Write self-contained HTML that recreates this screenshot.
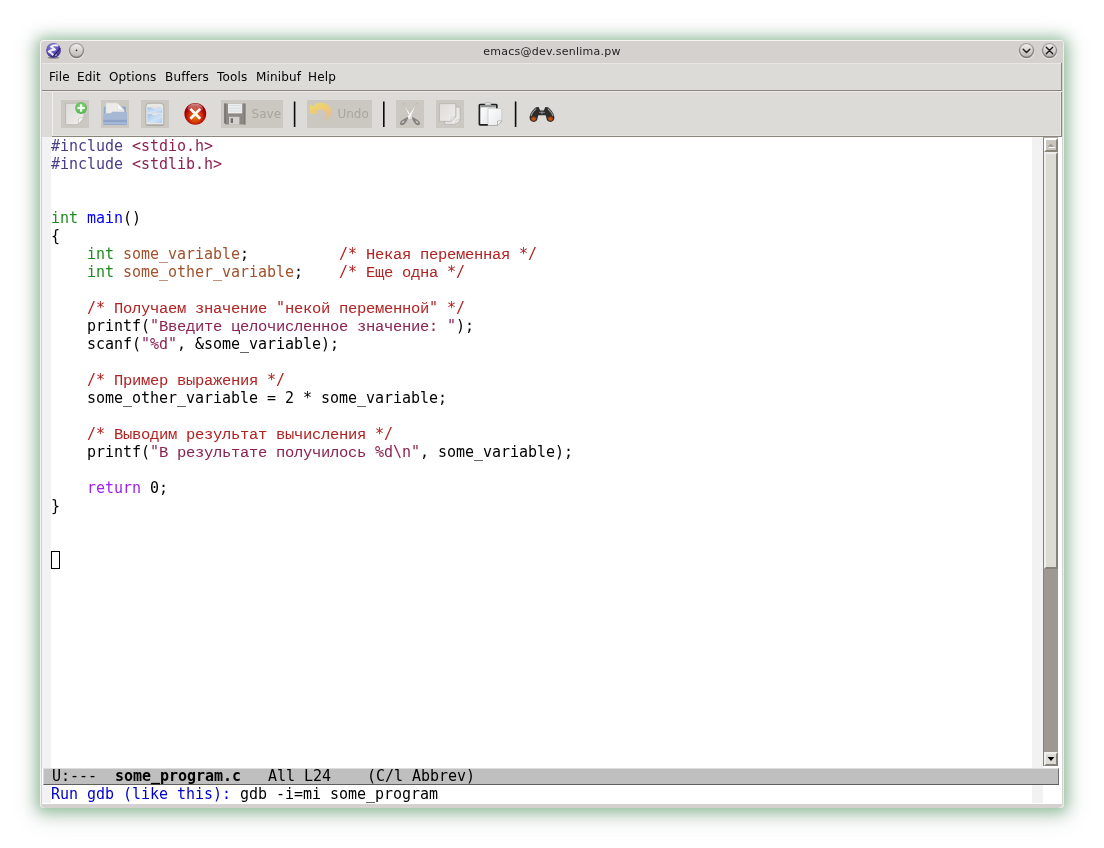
<!DOCTYPE html>
<html lang="ru">
<head>
<meta charset="utf-8">
<title>emacs@dev.senlima.pw</title>
<style>
html,body{margin:0;padding:0;}
body{width:1104px;height:848px;background:#fff;overflow:hidden;position:relative;font-family:"DejaVu Sans","Liberation Sans",sans-serif;}
.abs{position:absolute;}
#shadow{position:absolute;left:40px;top:40px;width:1024px;height:768px;border-radius:4px;
 box-shadow:0 1px 14px 3px rgba(138,186,147,.9),0 4px 22px 7px rgba(70,85,75,.15);}
#win{position:absolute;left:40px;top:40px;width:1024px;height:768px;background:#d5d1ce;border-radius:3.5px 3.5px 5px 5px;overflow:hidden;will-change:transform;}
#hl{z-index:5;position:absolute;left:0;top:0;width:1024px;height:768px;border-radius:3.5px 3.5px 5px 5px;box-shadow:inset 1px 1px 0 rgba(255,255,255,.75),inset -1px 0 0 rgba(255,255,255,.6);pointer-events:none;}
#title{position:absolute;left:0;top:0;width:1024px;height:23px;background:#d5d1ce;}
#ttext{position:absolute;left:0;top:5px;width:1024px;text-align:center;font-size:11px;line-height:14px;letter-spacing:.25px;color:#1e1e1e;}
#client{position:absolute;left:2px;top:23px;width:1020px;height:741px;background:#fff;}
#menubar{position:absolute;left:0;top:0;width:1020px;height:27px;background:#dddbd7;border-top:1px solid #e9e7e4;box-sizing:border-box;}
#menubar span{position:absolute;top:5px;font-size:12px;line-height:16px;letter-spacing:.15px;color:#000;white-space:pre;}
#mline{position:absolute;left:0;top:27px;width:1020px;height:1px;background:#8a867e;}
#toolbar{position:absolute;left:0;top:28px;width:1020px;height:45px;background:#dddbd7;border-top:1px solid #eceae7;box-sizing:border-box;}
#tline{position:absolute;left:0;top:73px;width:1020px;height:1px;background:#8a867e;}
.tb{position:absolute;top:9px;height:28px;background:#cbc8c2;}
.sep{position:absolute;top:9px;width:2px;height:27px;background:#111;}
.tbl{position:absolute;top:15px;font-size:13px;line-height:16px;color:#9a968f;}
#text{position:absolute;left:0;top:74px;width:1020px;height:667px;background:#fff;}
.fr{position:absolute;background:#f2f2f2;}
pre{margin:0;position:absolute;left:9px;top:0;will-change:transform;font-family:"DejaVu Sans Mono","Liberation Mono",monospace;font-size:15px;line-height:18px;letter-spacing:-0.031px;color:#000;white-space:pre;}
pre i{font-style:normal;font-family:"Liberation Mono",monospace;font-size:15.5px;letter-spacing:-0.302px;line-height:1px;}
.pp{color:#483d8b}.st{color:#8b2252}.ty{color:#228b22}.fn{color:#0000ff}.va{color:#a0522d}.cm{color:#b22222}.kw{color:#a020f0}.mp{color:#0000cd}
#cursor{position:absolute;left:9px;top:414px;width:9px;height:18px;box-sizing:border-box;border:1px solid #000;}
#sb{position:absolute;left:1001px;top:0;width:15px;height:629px;background:#9d9992;border-left:1px solid #86827a;border-top:1px solid #b3afa8;box-sizing:border-box;}
.btn{position:absolute;left:0;width:14px;background:#dddbd6;box-sizing:border-box;border:2px solid;border-color:#efeeec #86827a #86827a #efeeec;}
#modeline{position:absolute;left:1px;top:631px;width:1016px;height:17px;background:#bfbfbf;box-sizing:border-box;border-top:1px solid #dcdcdc;border-bottom:1px solid #5e5e5e;border-right:1px solid #6e6e6e;border-left:1px solid #dcdcdc;}
</style>
</head>
<body>
<div id="shadow"></div>
<div id="win">
 <div id="hl"></div>
 <div id="title"><div id="ttext">emacs@dev.senlima.pw</div></div>
 <div id="client">
  <div id="menubar">
   <span style="left:7px">File</span><span style="left:35px">Edit</span><span style="left:67px">Options</span><span style="left:123px">Buffers</span><span style="left:175px">Tools</span><span style="left:214px">Minibuf</span><span style="left:266px">Help</span>
  </div>
  <div id="mline"></div><div class="abs" style="left:1019px;top:0;width:1px;height:28px;background:#8a867e"></div>
  <div id="toolbar"><div class="abs" style="left:10px;top:0;width:1px;height:44px;background:#f1f0ee"></div><div class="abs" style="left:1018px;top:0;width:1px;height:44px;background:#e8e6e3"></div><div class="abs" style="left:1019px;top:0;width:1px;height:45px;background:#8a867e"></div><div class="abs" style="left:10px;top:43px;width:1009px;height:1px;background:#e8e6e3"></div></div>
  <div id="tline"></div><div class="abs" style="left:0;top:73px;width:10px;height:1px;background:#dddbd7"></div>
  <div id="text">
   <div class="fr" style="left:0;top:0;width:9px;height:631px"></div>
   <div class="fr" style="left:990px;top:0;width:11px;height:631px"></div>
   <div class="fr" style="left:0;top:648px;width:9px;height:18px"></div>
   <div class="fr" style="left:990px;top:648px;width:11px;height:18px"></div>
<pre style="top:0"><span class="pp">#include</span> <span class="st">&lt;stdio.h&gt;</span>
<span class="pp">#include</span> <span class="st">&lt;stdlib.h&gt;</span>


<span class="ty">int</span> <span class="fn">main</span>()
{
    <span class="ty">int</span> <span class="va">some_variable</span>;          <span class="cm">/* <i>Некая</i> <i>переменная</i> */</span>
    <span class="ty">int</span> <span class="va">some_other_variable</span>;    <span class="cm">/* <i>Еще</i> <i>одна</i> */</span>

    <span class="cm">/* <i>Получаем</i> <i>значение</i> "<i>некой</i> <i>переменной</i>" */</span>
    printf(<span class="st">"<i>Введите</i> <i>целочисленное</i> <i>значение</i>: "</span>);
    scanf(<span class="st">"%d"</span>, &amp;some_variable);

    <span class="cm">/* <i>Пример</i> <i>выражения</i> */</span>
    some_other_variable = 2 * some_variable;

    <span class="cm">/* <i>Выводим</i> <i>результат</i> <i>вычисления</i> */</span>
    printf(<span class="st">"<i>В</i> <i>результате</i> <i>получилось</i> %d\n"</span>, some_variable);

    <span class="kw">return</span> 0;
}</pre>
   <div id="cursor"></div>
   <div id="sb">
    <div class="btn" style="top:0;height:14px;background:#c9c6c0;border-color:#fff #8a867c #8a867c #fff"></div>
    <div class="btn" style="top:14px;height:417px"></div>
    <div class="btn" style="top:614px;height:14px"></div>
   </div>
   <div id="modeline"></div>
<pre style="top:630px;left:10px">U:---  <b>some_program.c</b>   All L24    (C/l Abbrev)</pre>
<pre style="top:648px"><span class="mp">Run gdb (like this): </span>gdb -i=mi some_program</pre>
  </div>
 </div>
</div>

<svg id="icons" class="abs" style="left:0;top:0;will-change:transform" width="1104" height="848" viewBox="0 0 1104 848">
<defs>
 <linearGradient id="gPage" x1="0" y1="0" x2="1" y2="1"><stop offset="0" stop-color="#dddcd8"/><stop offset="1" stop-color="#efeeec"/></linearGradient>
 <linearGradient id="gPageW" x1="0" y1="0" x2="1" y2="1"><stop offset="0" stop-color="#ffffff"/><stop offset="1" stop-color="#e4e6e8"/></linearGradient>
 <radialGradient id="gGreen" cx="0.5" cy="0.4" r="0.65"><stop offset="0" stop-color="#9ad88c"/><stop offset="1" stop-color="#4aae46"/></radialGradient>
 <radialGradient id="gRed" cx="0.5" cy="0.62" r="0.52"><stop offset="0" stop-color="#ea7800"/><stop offset="0.45" stop-color="#d84804"/><stop offset="0.8" stop-color="#b80808"/><stop offset="1" stop-color="#960000"/></radialGradient>
 <linearGradient id="gRedGloss" x1="0" y1="0" x2="0" y2="1"><stop offset="0" stop-color="#fff" stop-opacity=".55"/><stop offset="1" stop-color="#fff" stop-opacity="0"/></linearGradient>
 <linearGradient id="gBlue" x1="0" y1="0" x2="1" y2="1"><stop offset="0" stop-color="#9cc3ee"/><stop offset="0.6" stop-color="#cfe3f7"/><stop offset="1" stop-color="#a9cbf0"/></linearGradient>
 <linearGradient id="gUndo" x1="0.1" y1="0" x2="0.55" y2="1"><stop offset="0" stop-color="#e9dd6a"/><stop offset="0.5" stop-color="#f0c878"/><stop offset="0.75" stop-color="#efc07a" stop-opacity=".7"/><stop offset="1" stop-color="#eeb86a" stop-opacity="0"/></linearGradient>
 <linearGradient id="gBtn" x1="0" y1="0" x2="0" y2="1"><stop offset="0" stop-color="#efedeb"/><stop offset="1" stop-color="#bdbab6"/></linearGradient>
 <linearGradient id="gBtnRing" x1="0" y1="0" x2="0" y2="1"><stop offset="0" stop-color="#a29f9b"/><stop offset="1" stop-color="#7c7976"/></linearGradient>
 <radialGradient id="gEmacs" cx="0.4" cy="0.3" r="0.8"><stop offset="0" stop-color="#8a86d8"/><stop offset="0.6" stop-color="#5548b0"/><stop offset="1" stop-color="#2e2680"/></radialGradient>
 <radialGradient id="gLens" cx="0.5" cy="0.6" r="0.6"><stop offset="0" stop-color="#dc641c"/><stop offset="1" stop-color="#7a2c08"/></radialGradient>
</defs>

<!-- title bar: emacs icon -->
<ellipse cx="53.5" cy="57.6" rx="6" ry="1.2" fill="#000" opacity=".35"/>
<circle cx="53.5" cy="50.3" r="7.4" fill="url(#gEmacs)"/>
<path d="M57.6 45.5 C55 45 52.6 45.6 51 46.6 L55 49.5 C52.5 49.8 50 50.6 48.7 51.5 C50.5 52.8 52 53.6 53 54.8" fill="none" stroke="#fff" stroke-width="1.9" stroke-linejoin="round" stroke-linecap="round" opacity=".9"/><path d="M55.4 55.6 L56.6 54.6" stroke="#fff" stroke-width="1.2" opacity=".8"/>
<path d="M60.4 48 L52.2 57.4" stroke="#1a1640" stroke-width="1"/>
<!-- title bar: round buttons -->
<g>
 <circle cx="76.5" cy="51.4" r="7.9" fill="#fff" opacity=".55"/>
 <circle cx="76.5" cy="50.6" r="7.7" fill="url(#gBtnRing)"/>
 <circle cx="76.5" cy="50.3" r="6.3" fill="url(#gBtn)"/>
 <circle cx="76.5" cy="50.4" r="0.8" fill="#222"/>
 <circle cx="1026.5" cy="51.4" r="7.9" fill="#fff" opacity=".55"/>
 <circle cx="1026.5" cy="50.6" r="7.7" fill="url(#gBtnRing)"/>
 <circle cx="1026.5" cy="50.3" r="6.3" fill="url(#gBtn)"/>
 <path d="M1023.2 49.2 L1026.5 52.4 L1029.8 49.2" fill="none" stroke="#1c1c1c" stroke-width="1.4" stroke-linecap="round" stroke-linejoin="round"/>
 <circle cx="1049.5" cy="51.4" r="7.9" fill="#fff" opacity=".55"/>
 <circle cx="1049.5" cy="50.6" r="7.7" fill="url(#gBtnRing)"/>
 <circle cx="1049.5" cy="50.3" r="6.3" fill="url(#gBtn)"/>
 <path d="M1046.3 47.3 L1052.7 53.7 M1052.7 47.3 L1046.3 53.7" fill="none" stroke="#1c1c1c" stroke-width="1.4" stroke-linecap="round"/>
</g>

<!-- toolbar button backgrounds -->
<g fill="#cbc8c2">
 <rect x="61" y="100" width="28" height="28"/>
 <rect x="101" y="100" width="28" height="28"/>
 <rect x="141" y="100" width="28" height="28"/>
 <rect x="221" y="100" width="62" height="28"/>
 <rect x="307" y="100" width="65" height="28"/>
 <rect x="396" y="100" width="28" height="28"/>
 <rect x="436" y="100" width="28" height="28"/>
</g>
<!-- separators -->
<g fill="#0a0a0a">
 <rect x="293.8" y="101.5" width="1.6" height="25.5"/>
 <rect x="383" y="101.5" width="1.6" height="25.5"/>
 <rect x="514.8" y="101.5" width="1.6" height="25.5"/>
</g>

<!-- new document -->
<g transform="translate(61,100)">
 <path d="M4.6 3.2 H23 V17.2 L17 24.8 H4.6 Z" fill="url(#gPage)" stroke="#b9b7b2" stroke-width=".9" stroke-linejoin="round"/>
 <path d="M23 17.2 C20.4 17.8 18.2 18.2 17.6 18.8 C17.8 20.8 17.4 23 17 24.8 Z" fill="#f8f8f7" stroke="#b9b7b2" stroke-width=".6"/>
 <circle cx="20.1" cy="8" r="6" fill="url(#gGreen)"/>
 <path d="M20.1 4.3 V11.7 M16.4 8 H23.8" stroke="#f4fbf2" stroke-width="2.1"/>
</g>

<!-- open folder -->
<g transform="translate(101,100)">
 <path d="M2.8 7.4 Q2.8 6.4 3.8 6.4 H24 Q25 6.4 25 7.4 V16 H2.8 Z" fill="#8ea9cd"/>
 <path d="M4.8 2.8 H16 L23.2 10 V14 H4.8 Z" fill="#ecebe9" stroke="#cfcdc9" stroke-width=".5"/>
 <path d="M16 2.8 C16.6 5.5 17 8 16.6 9.8 C19 9.4 21.5 9.6 23.2 10 Z" fill="#fafafa" stroke="#d4d2ce" stroke-width=".4"/>
 <path d="M2.2 14 Q2.2 13.2 3 13.2 H10 L11 11.8 H25.2 Q26 11.8 26 12.6 V24 Q26 25.1 25 25.1 H3.2 Q2.2 25.1 2.2 24 Z" fill="#a5b9d5"/>
 <rect x="2.2" y="19.8" width="23.8" height="2.3" fill="#8ba3c6"/>
 <rect x="2.2" y="24.2" width="23.8" height=".9" fill="#8ba3c6" opacity=".7"/>
</g>

<!-- dired (cabinet) -->
<g transform="translate(141,100)">
 <path d="M4.8 6.5 Q4.8 3.2 8 3.2 H19.6 Q22.8 3.2 22.8 6.5 V24 Q22.8 25 21.8 25 H5.8 Q4.8 25 4.8 24 Z" fill="#e9e8e5" stroke="#a9a7a2" stroke-width=".9"/>
 <rect x="5.4" y="24.6" width="16.8" height="1" fill="#8f8d88" opacity=".6"/>
 <rect x="6.4" y="7.4" width="14.8" height="5.3" fill="url(#gBlue)"/>
 <rect x="6.4" y="13.8" width="14.8" height="9" fill="url(#gBlue)"/>
 <rect x="11.2" y="7.2" width="5.6" height="1.6" rx=".6" fill="#f4f4f2" stroke="#c9c7c2" stroke-width=".4"/>
 <rect x="11.2" y="13.6" width="5.6" height="1.6" rx=".6" fill="#f4f4f2" stroke="#c9c7c2" stroke-width=".4"/>
</g>

<!-- close (red x) -->
<g>
 <circle cx="195.3" cy="113.8" r="10.9" fill="url(#gRed)"/>
 <ellipse cx="195.3" cy="108.2" rx="7.6" ry="4.6" fill="url(#gRedGloss)"/>
 <path d="M190.4 108.9 L200.2 118.7 M200.2 108.9 L190.4 118.7" stroke="#fff" stroke-width="2.7"/>
</g>

<!-- save (floppy) -->
<g transform="translate(221,100)">
 <path d="M3.2 3.6 H24.4 V24.6 H5 L3.2 23 Z" fill="#8c8985"/>
 <path d="M3.2 3.6 H5 V24.6 L3.2 23 Z" fill="#7b7874"/>
 <path d="M22.8 3.6 H24.4 V24.6 H22.8 Z" fill="#7f7c78"/>
 <rect x="7" y="3.6" width="14.2" height="9.8" fill="#eeeeec"/>
 <path d="M7.8 5.5 H20.4 M7.8 8.2 H20.4 M7.8 10.9 H20.4" stroke="#cdd6e2" stroke-width=".7"/>
 <rect x="8" y="16.8" width="10.4" height="7.8" fill="#d3d2cf"/>
 <rect x="9.7" y="18.3" width="2.3" height="4.6" fill="#6c6966"/>
</g>

<!-- undo -->
<g transform="translate(307,100)">
 <path d="M2.9 4 L2.9 13.4 L11.9 13.4 L9.6 11 C11.5 9.4 14.5 9 16.4 10.4 C18.6 12 18.8 15.4 17.4 18.2 C16.6 19.8 15.6 21 14.4 22.2 L18.6 23.2 C22 20.6 24.7 16.6 24.7 12.4 C24.7 6.8 19.6 2.7 13.6 2.7 C10.4 2.7 7.8 4.2 6 6.8 Z" fill="url(#gUndo)"/>
</g>

<!-- cut (scissors) -->
<g transform="translate(396,100)">
 <path d="M6.9 3 L17.6 18.2 L14.4 19.4 Z" fill="#f6f6f5" stroke="#b3b1ac" stroke-width=".5"/>
 <path d="M21 3 L10.4 18.2 L13.6 19.4 Z" fill="#fdfdfc" stroke="#b3b1ac" stroke-width=".5"/>
 <path d="M15.6 17 C18.4 17.8 23 20 24 22.8 C24.8 25.2 21.6 26.2 19.6 24.2 C17.8 22.4 16.2 19.6 15.6 17 Z M19.4 20.6 C19.8 22.2 21.2 23.8 22.2 23.2 C23 22.4 21 20.8 19.4 20.6 Z" fill="#85837f" fill-rule="evenodd"/>
 <path d="M12.4 17 C9.6 17.8 5 20 4 22.8 C3.2 25.2 6.4 26.2 8.4 24.2 C10.2 22.4 11.8 19.6 12.4 17 Z M8.6 20.6 C8.2 22.2 6.8 23.8 5.8 23.2 C5 22.4 7 20.8 8.6 20.6 Z" fill="#85837f" fill-rule="evenodd"/>
</g>

<!-- copy -->
<g transform="translate(436,100)">
 <path d="M8.6 7 H24.2 V19.6 L19.6 24.4 H8.6 Z" fill="url(#gPage)" stroke="#b7b5b0" stroke-width=".9" stroke-linejoin="round"/>
 <path d="M24.2 19.6 C22.4 19.8 20.6 20 20 20.6 C20.2 22 20 23.4 19.6 24.4 Z" fill="#f7f7f6" stroke="#b7b5b0" stroke-width=".6"/>
 <path d="M3.4 3.6 H19.8 V16.8 L14.8 21.4 H3.4 Z" fill="url(#gPage)" stroke="#b7b5b0" stroke-width=".9" stroke-linejoin="round"/>
 <path d="M19.8 16.8 C18 17 16 17.2 15.2 17.8 C15.4 19.2 15.2 20.4 14.8 21.4 Z" fill="#f7f7f6" stroke="#b7b5b0" stroke-width=".6"/>
</g>

<!-- paste -->
<g>
 <rect x="479.4" y="104.6" width="17.4" height="20.2" rx=".7" fill="#f6f6f6" stroke="#1f1f1f" stroke-width="1.7"/>
 <rect x="480.4" y="105.2" width="15.4" height="2.2" fill="#8e9092"/>
 <rect x="481.2" y="107.6" width="7.4" height="16" fill="url(#gPageW)"/>
 <rect x="485" y="102.4" width="6" height="2.6" rx=".8" fill="#d9dbdc" stroke="#a4a6a8" stroke-width=".5"/>
 <path d="M488 108.6 H501.8 V120.8 L497.4 125.4 H488 Z" fill="url(#gPageW)" stroke="#bdbdbd" stroke-width=".6"/>
 <path d="M501.8 120.8 L497.4 125.4 L497.6 121 Z" fill="#fff" stroke="#7f7f7f" stroke-width=".5"/>
</g>

<!-- search (binoculars) -->
<g>
 <path d="M536 107.2 L538.6 106.9 L540.2 110.6 L543.8 110.6 L545.4 106.9 L548 107.2 C551.4 110 554.4 114 554.4 117.8 C554.4 120.4 552.6 121.9 550.4 121.9 C548 121.9 546.4 120.2 546.4 117.8 L545.6 115.2 L538.4 115.2 L537.6 117.8 C537.6 120.2 536 121.9 533.6 121.9 C531.4 121.9 529.6 120.4 529.6 117.8 C529.6 114 532.6 110 536 107.2 Z" fill="#2d2c2b"/>
 <path d="M536.2 108.6 C533.8 110.8 531.6 113.6 531 116" stroke="#9a9997" stroke-width="1.1" fill="none"/>
 <path d="M547.8 108.6 C550.2 110.8 552.4 113.6 553 116" stroke="#9a9997" stroke-width="1.1" fill="none"/>
 <path d="M539 112.4 H545" stroke="#6f6e6c" stroke-width="1.2"/>
 <circle cx="542" cy="112.6" r="1.2" fill="#8a8987"/>
 <ellipse cx="533.6" cy="118.6" rx="2.7" ry="2.4" fill="url(#gLens)"/>
 <ellipse cx="550.4" cy="118.6" rx="2.7" ry="2.4" fill="url(#gLens)"/>
</g>

<!-- scrollbar arrows -->
<path d="M1048.8 148 H1055 V147 H1048.8 Z" fill="#fff"/>
<path d="M1047.8 147 L1050.9 143.4 L1054 147 Z" fill="#a29e96"/>
<path d="M1047.6 757 H1054.4 L1051 761 Z" fill="#000"/>
<!-- toolbar labels -->
<g font-family="DejaVu Sans, Liberation Sans, sans-serif" font-size="12" fill="#a8a59e">
 <text x="251.6" y="117.8">Save</text>
 <text x="337.4" y="117.8">Undo</text>
</g>
</svg>
</body>
</html>
